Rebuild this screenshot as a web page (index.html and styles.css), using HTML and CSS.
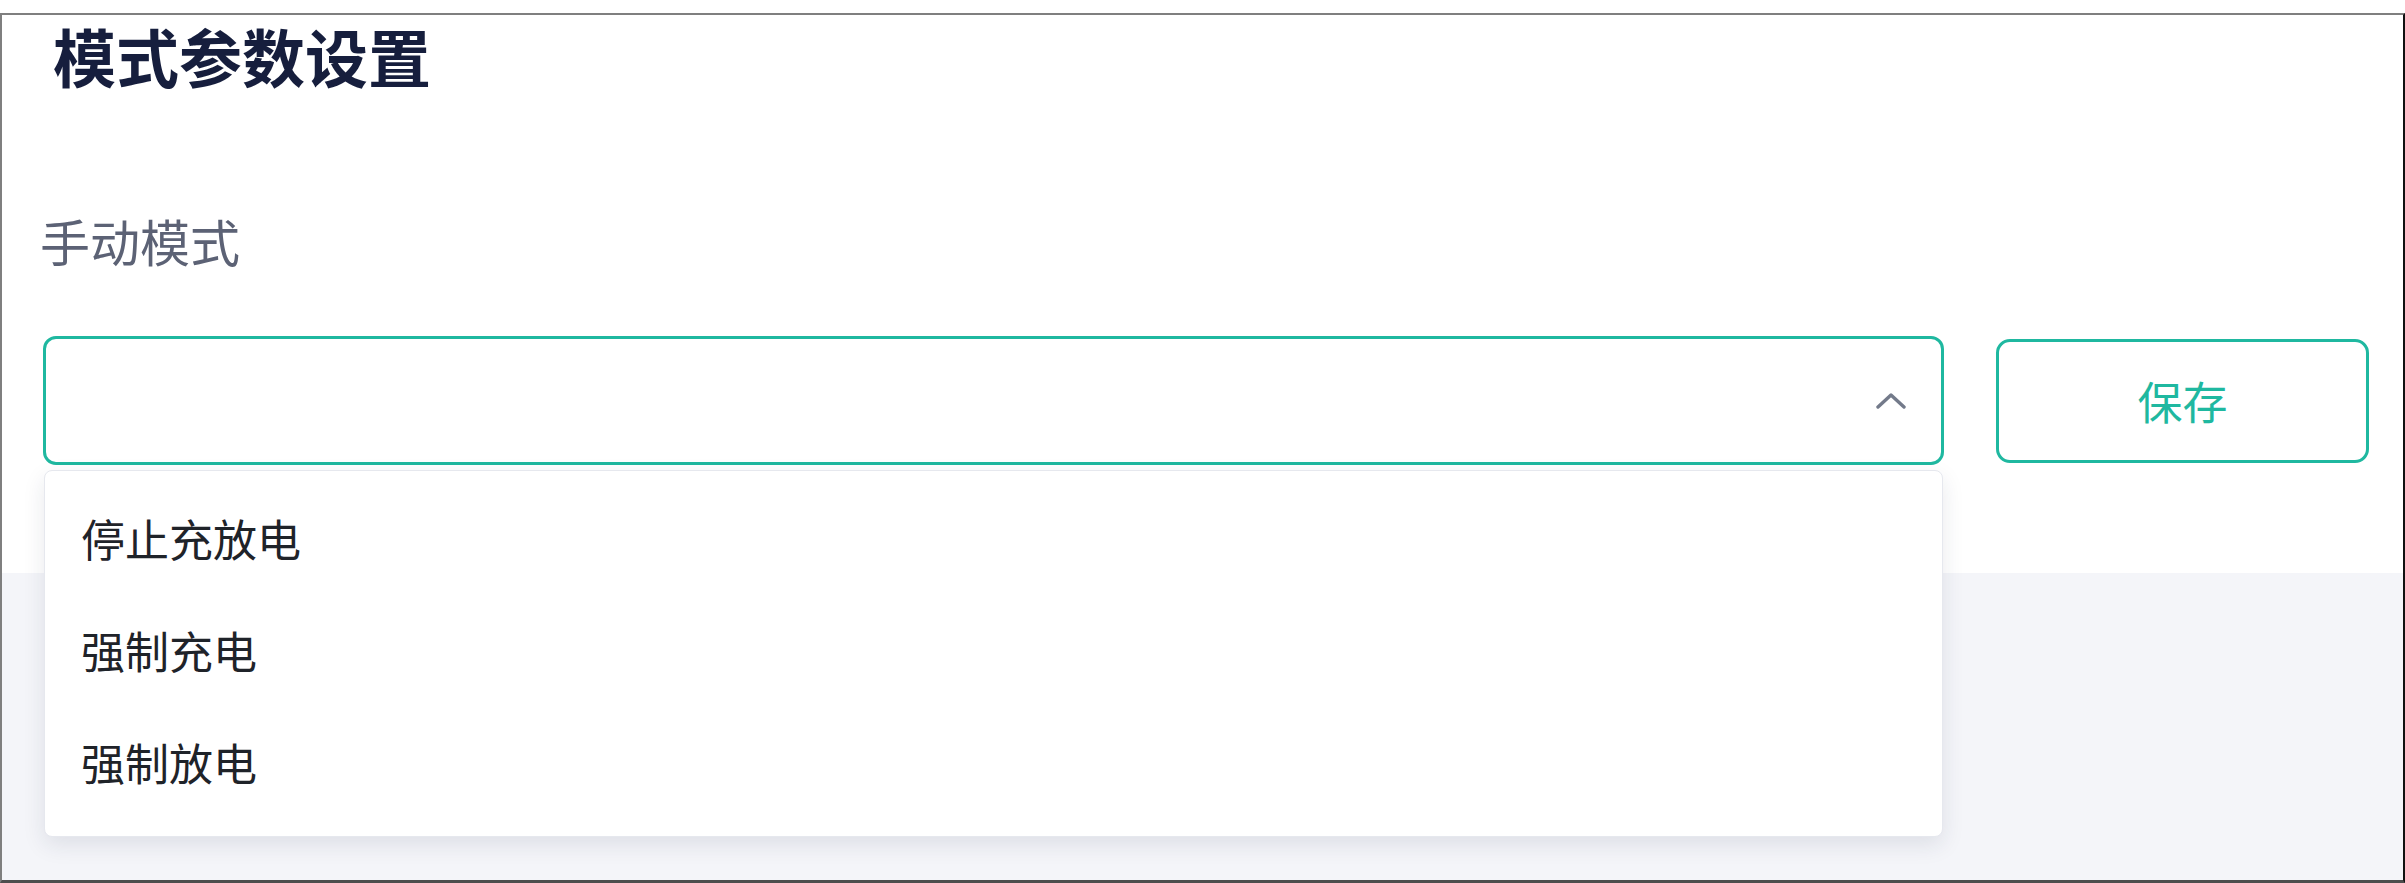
FILE: index.html
```html
<!DOCTYPE html>
<html lang="zh-CN">
<head>
<meta charset="utf-8">
<title>模式参数设置</title>
<link rel="stylesheet" href="styles.css">
</head>
<body>
<div class="frame">
  <section class="panel">
    <h1 class="title">模式参数设置</h1>
    <div class="label">手动模式</div>
    <div class="row">
      <div class="select-wrap">
        <div class="select">
          <svg class="chevron" width="30" height="17" viewBox="0 0 30 17" aria-hidden="true">
            <path d="M2 15 L15 3 L28 15" fill="none" stroke="#737a8a" stroke-width="3.4" stroke-linecap="round" stroke-linejoin="round"/>
          </svg>
        </div>
        <ul class="dropdown">
          <li class="option">停止充放电</li>
          <li class="option">强制充电</li>
          <li class="option">强制放电</li>
        </ul>
      </div>
      <button class="save">保存</button>
    </div>
  </section>
  <div class="gray-area"></div>
</div>
</body>
</html>
```

FILE: styles.css
```css
html, body {
  margin: 0;
  padding: 0;
  width: 2405px;
  height: 883px;
  overflow: hidden;
  background: #ffffff;
  font-family: "Noto Sans CJK SC", "Noto Sans", sans-serif;
}

.frame {
  margin-top: 13px;
  height: 870px;
  box-sizing: border-box;
  border-top: 2px solid #7f7f7f;
  border-left: 2px solid #7f7f7f;
  border-right: 2px solid #111111;
  border-bottom: 3px solid #4d4d4d;
  display: flex;
  flex-direction: column;
  background: #f4f5f9;
}

.panel {
  height: 558px;
  background: #ffffff;
  box-sizing: border-box;
  padding-top: 8px;
}

.title {
  margin: 0;
  padding-left: 51px;
  font-size: 63px;
  line-height: 63px;
  font-weight: 700;
  color: #161e3d;
}

.label {
  margin-top: 129px;
  padding-left: 38px;
  font-size: 50px;
  line-height: 50px;
  color: #5c6275;
}

.row {
  margin-top: 71px;
  padding-left: 41px;
  display: flex;
  align-items: center;
  gap: 52px;
}

.select-wrap {
  position: relative;
  width: 1901px;
}

.select {
  height: 129px;
  box-sizing: border-box;
  border: 3px solid #1fb8a0;
  border-radius: 13px;
  background: #ffffff;
  display: flex;
  align-items: center;
  justify-content: flex-end;
  padding-right: 35px;
}

.chevron {
  display: block;
}

.dropdown {
  position: absolute;
  top: 134px;
  left: 1px;
  right: 1px;
  margin: 0;
  padding: 11px 0 18px;
  list-style: none;
  background: #ffffff;
  border: 1px solid #e6e8ee;
  border-radius: 8px;
  box-shadow: 0 8px 22px rgba(30, 40, 70, 0.10);
  z-index: 5;
}

.option {
  height: 112px;
  line-height: 112px;
  padding-left: 36px;
  font-size: 44px;
  color: #1f2329;
}

.save {
  width: 373px;
  height: 124px;
  box-sizing: border-box;
  border: 3px solid #1fb8a0;
  border-radius: 14px;
  background: #ffffff;
  color: #1fb8a0;
  font-family: "Noto Sans CJK SC", "Noto Sans", sans-serif;
  font-size: 45px;
  padding: 0;
}

.gray-area {
  flex: 1;
  background: #f4f5f9;
}
```
